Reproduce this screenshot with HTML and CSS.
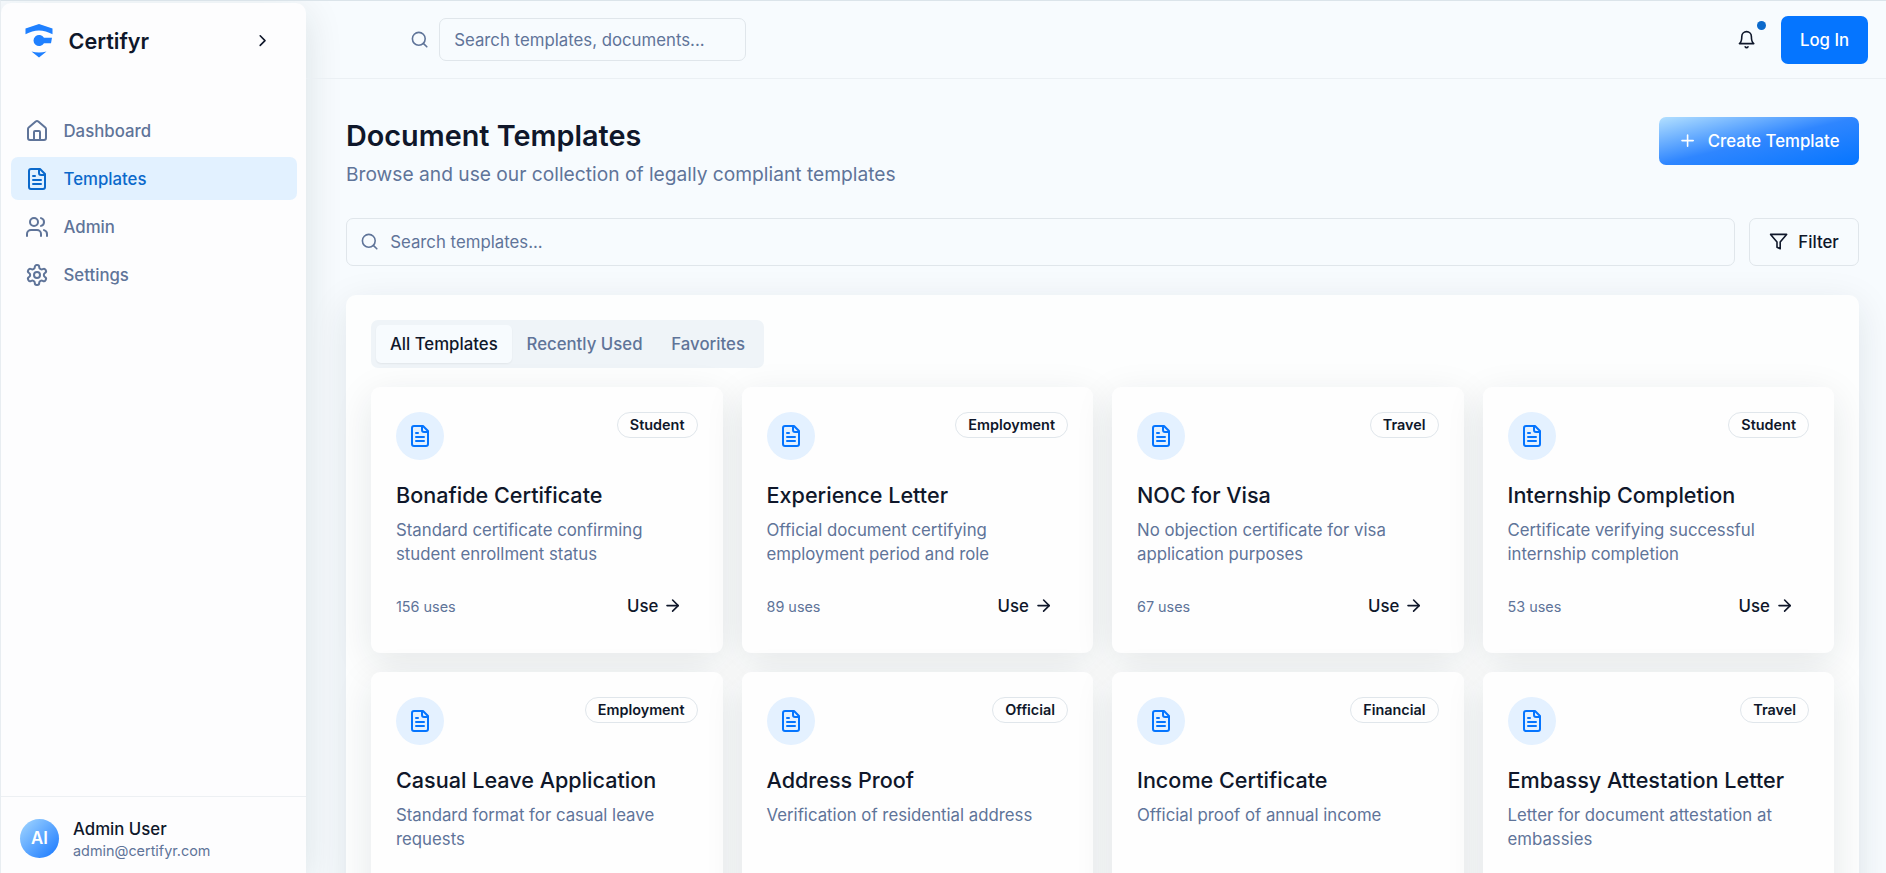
FILE: index.html
```
<!DOCTYPE html>
<html lang="en">
<head>
    <meta charset="UTF-8">
    <meta name="viewport" content="width=device-width, initial-scale=1.0">
    <title>Certifyr - Document Templates</title>
    <link rel="stylesheet" href="styles.css">
</head>
<body>
    <!-- shared icons -->
    <svg class="sprite">
        <symbol id="file-text" viewBox="0 0 24 24">
            <path d="M15 2H6a2 2 0 0 0-2 2v16a2 2 0 0 0 2 2h12a2 2 0 0 0 2-2V7Z"/>
            <path d="M14 2v4a2 2 0 0 0 2 2h4"/>
            <path d="M10 9H8"/><path d="M16 13H8"/><path d="M16 17H8"/>
        </symbol>
        <symbol id="search" viewBox="0 0 24 24">
            <circle cx="11" cy="11" r="8"/><path d="m21 21-4.3-4.3"/>
        </symbol>
        <symbol id="arrow-right" viewBox="0 0 24 24">
            <path d="M5 12h14"/><path d="m12 5 7 7-7 7"/>
        </symbol>
    </svg>

    <div class="app">
        <aside class="sidebar">
            <div class="sidebar-header">
                <svg class="logo" viewBox="0 0 28 34">
                    <path d="M0.5 4.500 14 0 27.500 4.500V10.300Q14 2.500 0.500 10.300Z"/>
                    <path d="M19 13.800A5.600 5.600 0 1 0 19 19.200H26L27 13.800Z"/>
                    <path d="M6.500 27.500Q14 29.500 21.500 27.500L14 33.500Z"/>
                </svg>
                <span class="brand">Certifyr</span>
                <svg class="icon icon-sm collapse" viewBox="0 0 24 24"><path d="m9 18 6-6-6-6"/></svg>
            </div>
            <nav class="side-nav">
                <a href="#" class="nav-item">
                    <svg class="icon" viewBox="0 0 24 24"><path d="M15 21v-8a1 1 0 0 0-1-1h-4a1 1 0 0 0-1 1v8"/><path d="M3 10a2 2 0 0 1 .709-1.528l7-5.999a2 2 0 0 1 2.582 0l7 5.999A2 2 0 0 1 21 10v9a2 2 0 0 1-2 2H5a2 2 0 0 1-2-2z"/></svg>
                    <span>Dashboard</span>
                </a>
                <a href="#" class="nav-item active">
                    <svg class="icon"><use href="#file-text"/></svg>
                    <span>Templates</span>
                </a>
                <a href="#" class="nav-item">
                    <svg class="icon" viewBox="0 0 24 24"><path d="M16 21v-2a4 4 0 0 0-4-4H6a4 4 0 0 0-4 4v2"/><circle cx="9" cy="7" r="4"/><path d="M22 21v-2a4 4 0 0 0-3-3.870"/><path d="M16 3.130a4 4 0 0 1 0 7.750"/></svg>
                    <span>Admin</span>
                </a>
                <a href="#" class="nav-item">
                    <svg class="icon" viewBox="0 0 24 24"><path d="M12.220 2h-.440a2 2 0 0 0-2 2v.180a2 2 0 0 1-1 1.730l-.430.250a2 2 0 0 1-2 0l-.150-.080a2 2 0 0 0-2.730.730l-.220.380a2 2 0 0 0 .730 2.730l.150.100a2 2 0 0 1 1 1.720v.510a2 2 0 0 1-1 1.740l-.150.090a2 2 0 0 0-.730 2.730l.220.380a2 2 0 0 0 2.730.730l.150-.080a2 2 0 0 1 2 0l.430.250a2 2 0 0 1 1 1.730V20a2 2 0 0 0 2 2h.440a2 2 0 0 0 2-2v-.180a2 2 0 0 1 1-1.730l.430-.250a2 2 0 0 1 2 0l.150.080a2 2 0 0 0 2.730-.730l.220-.390a2 2 0 0 0-.730-2.730l-.150-.080a2 2 0 0 1-1-1.740v-.500a2 2 0 0 1 1-1.740l.150-.090a2 2 0 0 0 .730-2.730l-.220-.380a2 2 0 0 0-2.730-.730l-.150.080a2 2 0 0 1-2 0l-.430-.250a2 2 0 0 1-1-1.730V4a2 2 0 0 0-2-2z"/><circle cx="12" cy="12" r="3"/></svg>
                    <span>Settings</span>
                </a>
            </nav>
            <div class="sidebar-user">
                <div class="avatar">AI</div>
                <div class="user-info">
                    <div class="user-name">Admin User</div>
                    <div class="user-email">admin@certifyr.com</div>
                </div>
            </div>
        </aside>

        <div class="content">
            <header class="topbar">
                <div class="top-search">
                    <svg class="icon icon-sm"><use href="#search"/></svg>
                    <input type="text" placeholder="Search templates, documents...">
                </div>
                <div class="top-actions">
                    <button class="bell">
                        <svg class="icon icon-sm" viewBox="0 0 24 24"><path d="M6 8a6 6 0 0 1 12 0c0 7 3 9 3 9H3s3-2 3-9"/><path d="M10.300 21a1.940 1.940 0 0 0 3.400 0"/></svg>
                        <span class="bell-dot"></span>
                    </button>
                    <button class="btn btn-primary">Log In</button>
                </div>
            </header>

            <main class="main">
                <div class="page-head">
                    <div>
                        <h1>Document Templates</h1>
                        <p>Browse and use our collection of legally compliant templates</p>
                    </div>
                    <button class="btn btn-gradient">
                        <svg class="icon icon-sm" viewBox="0 0 24 24"><path d="M5 12h14"/><path d="M12 5v14"/></svg>
                        Create Template
                    </button>
                </div>

                <div class="filters">
                    <label class="search-box">
                        <svg class="icon icon-sm"><use href="#search"/></svg>
                        <input type="text" placeholder="Search templates...">
                    </label>
                    <button class="btn btn-outline">
                        <svg class="icon icon-sm" viewBox="0 0 24 24"><path d="M22 3H2l8 9.460V19l4 2v-8.540L22 3z"/></svg>
                        Filter
                    </button>
                </div>

                <section class="panel">
                    <div class="tabs">
                        <button class="tab active">All Templates</button>
                        <button class="tab">Recently Used</button>
                        <button class="tab">Favorites</button>
                    </div>

                    <div class="grid">
                        <article class="card">
                            <div class="card-top">
                                <div class="card-icon"><svg class="icon"><use href="#file-text"/></svg></div>
                                <span class="badge">Student</span>
                            </div>
                            <h3>Bonafide Certificate</h3>
                            <p>Standard certificate confirming student enrollment status</p>
                            <div class="card-foot">
                                <span class="uses">156 uses</span>
                                <button class="use-btn">Use <svg class="icon icon-sm"><use href="#arrow-right"/></svg></button>
                            </div>
                        </article>
                        <article class="card">
                            <div class="card-top">
                                <div class="card-icon"><svg class="icon"><use href="#file-text"/></svg></div>
                                <span class="badge">Employment</span>
                            </div>
                            <h3>Experience Letter</h3>
                            <p>Official document certifying employment period and role</p>
                            <div class="card-foot">
                                <span class="uses">89 uses</span>
                                <button class="use-btn">Use <svg class="icon icon-sm"><use href="#arrow-right"/></svg></button>
                            </div>
                        </article>
                        <article class="card">
                            <div class="card-top">
                                <div class="card-icon"><svg class="icon"><use href="#file-text"/></svg></div>
                                <span class="badge">Travel</span>
                            </div>
                            <h3>NOC for Visa</h3>
                            <p>No objection certificate for visa application purposes</p>
                            <div class="card-foot">
                                <span class="uses">67 uses</span>
                                <button class="use-btn">Use <svg class="icon icon-sm"><use href="#arrow-right"/></svg></button>
                            </div>
                        </article>
                        <article class="card">
                            <div class="card-top">
                                <div class="card-icon"><svg class="icon"><use href="#file-text"/></svg></div>
                                <span class="badge">Student</span>
                            </div>
                            <h3>Internship Completion</h3>
                            <p>Certificate verifying successful internship completion</p>
                            <div class="card-foot">
                                <span class="uses">53 uses</span>
                                <button class="use-btn">Use <svg class="icon icon-sm"><use href="#arrow-right"/></svg></button>
                            </div>
                        </article>
                        <article class="card">
                            <div class="card-top">
                                <div class="card-icon"><svg class="icon"><use href="#file-text"/></svg></div>
                                <span class="badge">Employment</span>
                            </div>
                            <h3>Casual Leave Application</h3>
                            <p>Standard format for casual leave requests</p>
                        </article>
                        <article class="card">
                            <div class="card-top">
                                <div class="card-icon"><svg class="icon"><use href="#file-text"/></svg></div>
                                <span class="badge">Official</span>
                            </div>
                            <h3>Address Proof</h3>
                            <p>Verification of residential address</p>
                        </article>
                        <article class="card">
                            <div class="card-top">
                                <div class="card-icon"><svg class="icon"><use href="#file-text"/></svg></div>
                                <span class="badge">Financial</span>
                            </div>
                            <h3>Income Certificate</h3>
                            <p>Official proof of annual income</p>
                        </article>
                        <article class="card">
                            <div class="card-top">
                                <div class="card-icon"><svg class="icon"><use href="#file-text"/></svg></div>
                                <span class="badge">Travel</span>
                            </div>
                            <h3>Embassy Attestation Letter</h3>
                            <p>Letter for document attestation at embassies</p>
                        </article>
                    </div>
                </section>
            </main>
        </div>
    </div>
</body>
</html>
```

FILE: styles.css
```
:root {
    --bg: #f7fbfe;
    --text: #0f172a;
    --muted: #5f7499;
    --border: #e0e6eb;
    --blue: #0575ff;
    --blue-dark: #0b69cb;
    --blue-light: #e4f1ff;
    --shadow: 0 10px 38px rgba(15, 40, 45, 0.1);
}
* {
    box-sizing: border-box;
}
body {
    margin: 0;
    height: 100vh;
    overflow: hidden;
    font-family: 'Inter', sans-serif;
    font-size: 16.8px;
    line-height: 24px;
    background: var(--bg);
    color: var(--text);
}
button, input {
    font: inherit;
    color: inherit;
    background: none;
    border: none;
    padding: 0;
}
input {
    outline: none;
}
input::placeholder {
    color: var(--muted);
    opacity: 1;
}
.sprite {
    display: none;
}
.icon {
    width: 24px;
    height: 24px;
    flex-shrink: 0;
    fill: none;
    stroke: currentColor;
    stroke-width: 2;
    stroke-linecap: round;
    stroke-linejoin: round;
}
.icon-sm {
    width: 19.2px;
    height: 19.2px;
}
.app {
    display: flex;
    height: 100vh;
    overflow: hidden;
    border-top: 1px solid #dbe4ea;
    border-left: 1px solid #e8edf1;
}

/* sidebar */
.sidebar {
    width: 305px;
    margin-top: 2px;
    flex-shrink: 0;
    display: flex;
    flex-direction: column;
    background: #fdfdfe;
    border-radius: 10px 10px 0 0;
    box-shadow: 0 10px 38px rgba(15, 40, 45, 0.12);
}
.sidebar-header {
    display: flex;
    align-items: center;
    height: 76px;
    padding: 0 34px 0 24px;
}
.logo {
    width: 28px;
    height: 34px;
    fill: #1f80ff;
}
.brand {
    margin-left: 15.5px;
    font-size: 21.6px;
    font-weight: 600;
}
.collapse {
    margin-left: auto;
}
.side-nav {
    flex: 1;
    display: flex;
    flex-direction: column;
    gap: 5px;
    padding: 30px 9px 0 10px;
}
.nav-item {
    display: flex;
    align-items: center;
    gap: 14.5px;
    height: 43px;
    padding: 0 14px;
    border-radius: 7px;
    color: var(--muted);
    text-decoration: none;
    font-weight: 500;
}
.nav-item.active {
    background: #e2f1ff;
    color: var(--blue-dark);
}
.sidebar-user {
    display: flex;
    align-items: center;
    gap: 14px;
    height: 77px;
    padding: 7px 19px 0;
    border-top: 1px solid #edf0f3;
}
.avatar {
    width: 39px;
    height: 39px;
    border-radius: 50%;
    background: linear-gradient(135deg, #a5d8ff, #2b85ff 85%);
    color: #fff;
    font-weight: 600;
    line-height: 39px;
    text-align: center;
}
.user-info {
    padding-top: 2px;
}
.user-name {
    font-weight: 500;
    line-height: 22px;
}
.user-email {
    font-size: 14.4px;
    line-height: 21px;
    color: var(--muted);
}

/* top bar */
.content {
    flex: 1;
    min-width: 0;
    height: 100%;
}
.topbar {
    display: flex;
    align-items: center;
    justify-content: space-between;
    height: 78px;
    padding: 0 18px 0 104px;
    border-bottom: 1px solid #ebf0f4;
}
.top-search {
    display: flex;
    align-items: center;
    gap: 10px;
    color: var(--muted);
}
.top-search input {
    width: 307px;
    height: 43px;
    padding: 0 14px;
    border: 1px solid var(--border);
    border-radius: 7px;
}
.top-actions {
    display: flex;
    align-items: center;
    gap: 10px;
}
.bell {
    position: relative;
    display: flex;
    align-items: center;
    justify-content: center;
    width: 48px;
    height: 48px;
}
.bell-dot {
    position: absolute;
    top: 5px;
    right: 5px;
    width: 9px;
    height: 9px;
    border-radius: 50%;
    background: var(--blue-dark);
}
.btn {
    display: flex;
    align-items: center;
    justify-content: center;
    height: 48px;
    padding: 0 19px;
    border-radius: 7px;
    font-weight: 500;
}
.btn-primary {
    width: 87px;
    padding: 0;
    background: var(--blue);
    color: #fff;
}
.btn-gradient {
    gap: 10px;
    width: 200px;
    background: linear-gradient(to bottom right, #b3e0ff, #2f86ff 50%, #0575ff);
    color: #fff;
}
.btn-outline {
    gap: 10px;
    width: 110px;
    border: 1px solid var(--border);
}

/* page */
.main {
    padding: 38px 27px 0 40px;
}
.page-head {
    display: flex;
    justify-content: space-between;
    align-items: flex-start;
    height: 101px;
}
.page-head h1 {
    margin: 0;
    font-size: 28.8px;
    line-height: 38px;
    font-weight: 600;
}
.page-head p {
    margin: 5px 0 0;
    font-size: 19.2px;
    line-height: 29px;
    color: var(--muted);
}
.filters {
    display: flex;
    gap: 14px;
    margin-bottom: 29px;
}
.search-box {
    flex: 1;
    display: flex;
    align-items: center;
    gap: 11px;
    height: 48px;
    padding: 0 13px;
    border: 1px solid var(--border);
    border-radius: 7px;
    color: var(--muted);
}
.search-box input {
    flex: 1;
}
.panel {
    padding: 25px;
    border-radius: 10px;
    background: #fdfefe;
    box-shadow: var(--shadow);
}
.tabs {
    display: inline-flex;
    align-items: center;
    height: 48px;
    padding: 0 4.5px;
    border-radius: 7px;
    background: #eff4f8;
    color: var(--muted);
}
.tab {
    height: 38px;
    padding: 0 14.4px;
    border-radius: 5px;
    font-weight: 500;
}
.tab.active {
    background: var(--bg);
    color: var(--text);
    box-shadow: 0 1px 2px rgba(0, 0, 0, 0.06);
}
.grid {
    display: grid;
    grid-template-columns: repeat(4, 1fr);
    gap: 19px;
    margin-top: 19px;
}
.card {
    height: 266px;
    padding: 25px;
    border-radius: 9px;
    background: #fefefe;
    box-shadow: var(--shadow);
}
.card-top {
    display: flex;
    justify-content: space-between;
    align-items: flex-start;
}
.card-icon {
    display: flex;
    align-items: center;
    justify-content: center;
    width: 48px;
    height: 48px;
    border-radius: 50%;
    background: var(--blue-light);
    color: var(--blue);
}
.badge {
    height: 26px;
    padding: 0 12px;
    border: 1px solid var(--border);
    border-radius: 13px;
    font-size: 14.4px;
    line-height: 24px;
    font-weight: 600;
}
.card h3 {
    margin: 19px 0 6px;
    font-size: 21.6px;
    line-height: 33px;
    font-weight: 500;
}
.card p {
    margin: 0;
    max-width: 270px;
    color: var(--muted);
}
.card-foot {
    display: flex;
    align-items: center;
    justify-content: space-between;
    margin-top: 18px;
}
.uses {
    padding-top: 2px;
    font-size: 14.4px;
    color: var(--muted);
}
.use-btn {
    display: flex;
    align-items: center;
    gap: 5px;
    height: 43px;
    padding: 0 15px;
    font-weight: 500;
}
```
